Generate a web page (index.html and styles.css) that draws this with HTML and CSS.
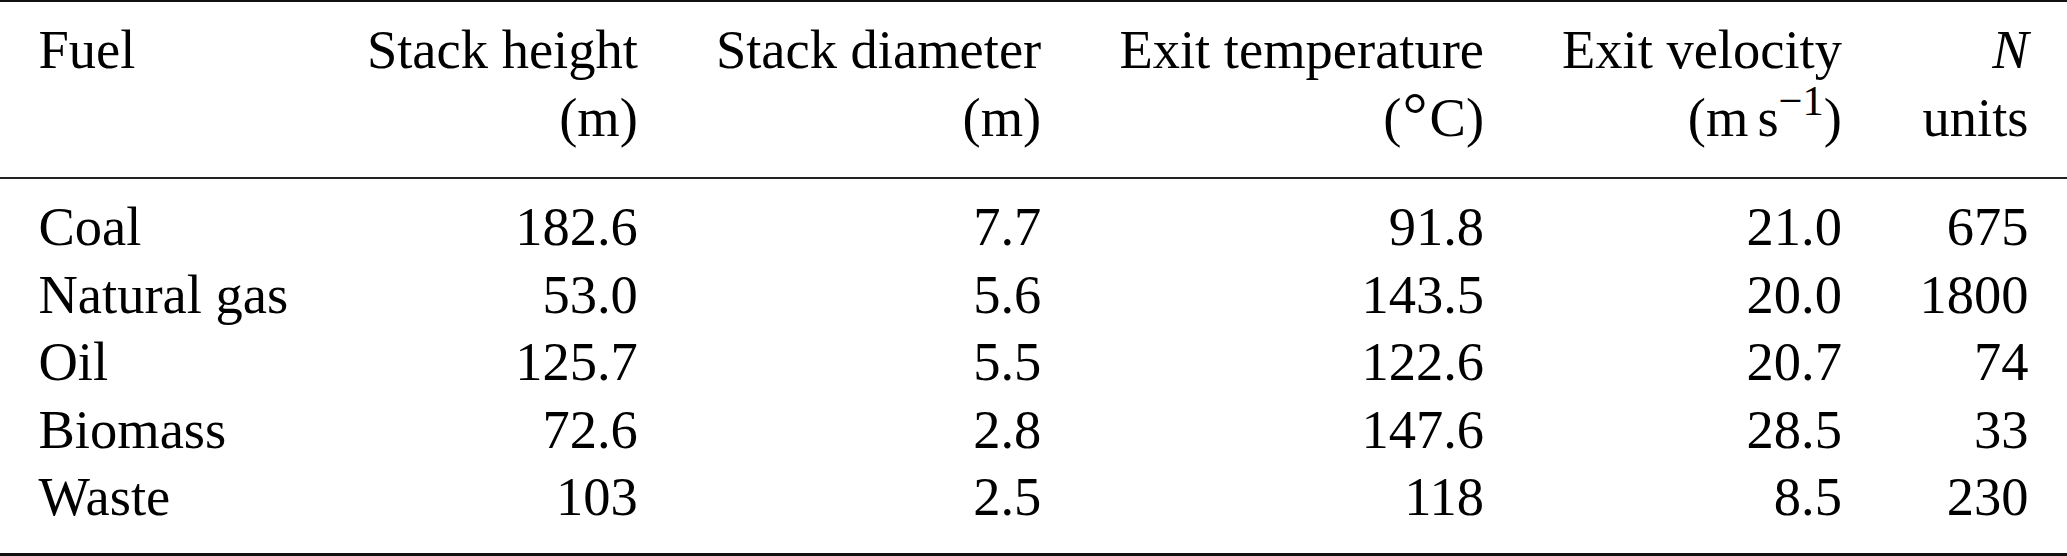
FILE: index.html
```html
<!DOCTYPE html>
<html lang="en">
<head>
<meta charset="utf-8">
<title>Stack parameters by fuel</title>
<link rel="stylesheet" href="styles.css">
</head>
<body>
<table class="tbl">
  <thead>
    <tr>
      <th class="left">Fuel</th>
      <th>Stack height<br>(m)</th>
      <th>Stack diameter<br>(m)</th>
      <th>Exit temperature<br>(<span class="deg">°</span>C)</th>
      <th>Exit velocity<br>(m<span class="thin"></span>s<sup class="sup">−1</sup>)</th>
      <th><i>N</i><br>units</th>
    </tr>
  </thead>
  <tbody>
    <tr><td class="left">Coal</td><td>182.6</td><td>7.7</td><td>91.8</td><td>21.0</td><td>675</td></tr>
    <tr><td class="left">Natural gas</td><td>53.0</td><td>5.6</td><td>143.5</td><td>20.0</td><td>1800</td></tr>
    <tr><td class="left">Oil</td><td>125.7</td><td>5.5</td><td>122.6</td><td>20.7</td><td>74</td></tr>
    <tr><td class="left">Biomass</td><td>72.6</td><td>2.8</td><td>147.6</td><td>28.5</td><td>33</td></tr>
    <tr><td class="left">Waste</td><td>103</td><td>2.5</td><td>118</td><td>8.5</td><td>230</td></tr>
  </tbody>
</table>
</body>
</html>
```
FILE: styles.css
```css
html, body {
  margin: 0;
  padding: 0;
  background: #fff;
}

body {
  font-family: "Liberation Serif", "Times New Roman", serif;
  font-size: 54.5px;
  color: #000;
}

.tbl {
  width: 100%;
  border-collapse: separate;
  border-spacing: 0;
}

.tbl th,
.tbl td {
  padding: 0 38.5px;
  text-align: right;
  white-space: nowrap;
  font-weight: normal;
}

.tbl th {
  vertical-align: top;
  line-height: 68px;
  padding-top: 14px;
  padding-bottom: 25px;
  border-top: 2px solid #111;
  border-bottom: 2px solid #222;
}

.tbl td {
  line-height: 67.5px;
  vertical-align: baseline;
}

.tbl tbody tr:first-child td {
  padding-top: 14px;
}

.tbl tbody tr:last-child td {
  padding-bottom: 22px;
  border-bottom: 3px solid #111;
}

.tbl .left {
  text-align: left;
}

.thin {
  display: inline-block;
  width: 9px;
}

.deg {
  display: inline-block;
  font-size: 1.15em;
  line-height: 0;
  margin: 0 2px 0 1px;
}

.sup {
  font-size: 0.78em;
  line-height: 0;
  vertical-align: 21px;
  color: #000;
}
```
